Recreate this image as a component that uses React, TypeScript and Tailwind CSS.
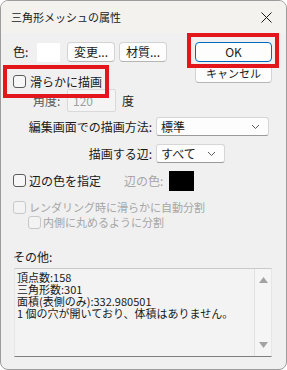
import React from "react";

const font = { fontFamily: '"Noto Sans CJK JP", "Noto Sans", sans-serif' };

function CheckBox({ disabled = false }: { disabled?: boolean }) {
  return (
    <span
      className={`inline-block w-[13px] h-[13px] rounded-[3px] border shrink-0 ${
        disabled ? "border-[#c8c8c8] bg-[#f3f3f3]" : "border-[#5c5c5c] bg-[#f7f7f7]"
      }`}
    />
  );
}

function Chevron() {
  return (
    <svg width="9" height="6" viewBox="0 0 9 6" className="shrink-0">
      <path d="M1 1 L4.5 4.5 L8 1" fill="none" stroke="#5a5a5a" strokeWidth="1" />
    </svg>
  );
}

function Select({ value, width }: { value: string; width: string }) {
  return (
    <div
      className={`${width} h-[19px] flex items-center justify-between pl-[4px] pr-[8px] bg-[#fdfdfd] border border-[#d6d6d6] border-b-[#9a9a9a] rounded-[3px] text-[12px] text-[#1a1a1a]`}
    >
      <span className="leading-none">{value}</span>
      <Chevron />
    </div>
  );
}

function Btn({ label, width }: { label: string; width: string }) {
  return (
    <div
      className={`${width} h-[20px] flex items-center justify-center bg-[#fdfdfd] border border-[#d3d3d3] border-b-[#b5b5b5] rounded-[4px] text-[12px] text-[#1a1a1a] leading-none`}
    >
      {label}
    </div>
  );
}

export default function App() {
  return (
    <div className="w-[287px] h-[370px] bg-white" style={font}>
      <div className="relative w-[287px] h-[370px] bg-[#f0f0f0] border border-[#9c9c9c] rounded-[8px] overflow-hidden">
        {/* title bar */}
        <div className="h-[32px] flex items-center justify-between pl-[10px] pr-[14px] bg-[#f3f2ef]">
          <span className="text-[11px] text-[#1a1a1a] leading-none">三角形メッシュの属性</span>
          <svg width="11" height="11" viewBox="0 0 11 11">
            <path d="M0.5 0.5 L10.5 10.5 M10.5 0.5 L0.5 10.5" stroke="#1a1a1a" strokeWidth="1" />
          </svg>
        </div>

        {/* color row */}
        <div className="mt-[9px] h-[20px] flex items-center">
          <span className="ml-[12px] w-[24px] text-[12px] text-[#1a1a1a] leading-none">色:</span>
          <span className="w-[23px] h-[19px] bg-white" />
          <div className="ml-[7px]">
            <Btn label="変更..." width="w-[48px]" />
          </div>
          <div className="ml-[4px]">
            <Btn label="材質..." width="w-[48px]" />
          </div>
          <div className="ml-auto mr-[14px] w-[77px] h-[20px] flex items-center justify-center bg-[#fdfdfd] border border-[#0067c0] rounded-[4px] text-[12px] text-[#1a1a1a] leading-none">
            OK
          </div>
        </div>

        {/* smooth row + cancel */}
        <div className="h-[27px] flex items-start">
          <div className="ml-[12px] mt-[13px] flex items-center gap-[4px]">
            <CheckBox />
            <span className="text-[12px] text-[#1a1a1a] leading-none">滑らかに描画</span>
          </div>
          <div className="ml-auto mr-[14px] mt-[2px] w-[77px] h-[19px] flex items-center justify-center bg-[#fdfdfd] border border-[#d3d3d3] border-b-[#b5b5b5] rounded-[4px] text-[11px] text-[#1a1a1a] leading-none">
            キャンセル
          </div>
        </div>

        {/* angle row */}
        <div className="h-[23px] flex items-center">
          <span className="ml-[32px] w-[34px] text-[12px] text-[#5a5a5a] leading-none">角度:</span>
          <div className="w-[49px] h-[23px] flex items-center pl-[5px] bg-[#f4f4f4] border border-[#d9d9d9] rounded-[2px] text-[12px] text-[#a0a0a0] leading-none">
            120
          </div>
          <span className="ml-[6px] text-[12px] text-[#1a1a1a] leading-none">度</span>
        </div>

        {/* draw method */}
        <div className="mt-[5px] h-[19px] flex items-center">
          <span className="w-[151px] text-right text-[12px] text-[#1a1a1a] leading-none">編集画面での描画方法:</span>
          <div className="ml-[4px]">
            <Select value="標準" width="w-[113px]" />
          </div>
        </div>

        {/* edges */}
        <div className="mt-[8px] h-[19px] flex items-center">
          <span className="w-[151px] text-right text-[12px] text-[#1a1a1a] leading-none">描画する辺:</span>
          <div className="ml-[4px]">
            <Select value="すべて" width="w-[69px]" />
          </div>
        </div>

        {/* edge color */}
        <div className="mt-[7px] h-[21px] flex items-center">
          <div className="ml-[12px] w-[111px] flex items-center gap-[3px]">
            <CheckBox />
            <span className="text-[12px] text-[#1a1a1a] leading-none">辺の色を指定</span>
          </div>
          <span className="w-[45px] text-[12px] text-[#a6a6a6] leading-none">辺の色:</span>
          <span className="w-[25px] h-[20px] bg-black" />
        </div>

        {/* rendering */}
        <div className="mt-[9px] h-[15px] flex items-center">
          <div className="ml-[12px] flex items-center gap-[3px]">
            <CheckBox disabled />
            <span className="text-[11px] text-[#a6a6a6] leading-none">レンダリング時に滑らかに自動分割</span>
          </div>
        </div>
        <div className="h-[15px] flex items-center">
          <div className="ml-[27px] flex items-center gap-[2px]">
            <CheckBox disabled />
            <span className="text-[11px] text-[#a6a6a6] leading-none">内側に丸めるように分割</span>
          </div>
        </div>

        {/* other */}
        <div className="mt-[21px] ml-[12px] text-[12px] text-[#1a1a1a] leading-none">その他:</div>
        <div className="mt-[5px] ml-[13px] w-[258px] h-[89px] flex bg-[#f3f3f3] border border-[#e6e6e6] border-t-[#c9c9c9] border-b-[#7e7e7e]">
          <div className="flex-1 pl-[2px] pt-[2px] text-[11px] leading-[12px] text-[#1a1a1a]">
            <div>頂点数:158</div>
            <div>三角形数:301</div>
            <div>面積(表側のみ):332.980501</div>
            <div>1 個の穴が開いており、体積はありません。</div>
          </div>
          <div className="w-[17px] flex flex-col items-center justify-between py-[8px] border-l border-[#e2e2e2] bg-[#f5f5f5]">
            <svg width="9" height="6" viewBox="0 0 9 6">
              <path d="M0 6 L4.5 0 L9 6 Z" fill="#a3a3a3" />
            </svg>
            <svg width="9" height="6" viewBox="0 0 9 6">
              <path d="M0 0 L4.5 6 L9 0 Z" fill="#a3a3a3" />
            </svg>
          </div>
        </div>

        {/* annotation boxes */}
        <div className="absolute left-[186px] top-[32px] w-[92px] h-[35px] border-[4px] border-[#e3161c]" />
        <div className="absolute left-[2px] top-[64px] w-[106px] h-[33px] border-[4px] border-[#e3161c]" />
      </div>
    </div>
  );
}
